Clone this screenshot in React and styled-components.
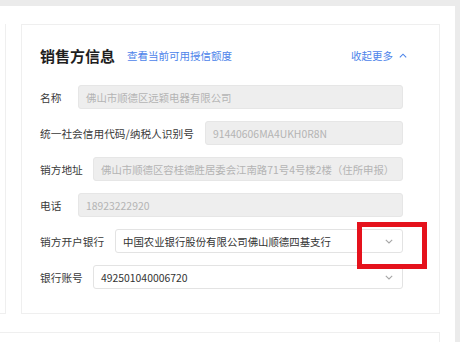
import React from "react";
import styled, { createGlobalStyle } from "styled-components";

const Global = createGlobalStyle`
  html, body { margin: 0; padding: 0; background: #ebebeb; }
  body { font-family: "Noto Sans CJK SC", "Noto Sans", sans-serif; }
  * { box-sizing: border-box; }
`;

const Page = styled.div`
  width: 460px;
  height: 342px;
  overflow: hidden;
  padding: 6px 5px 0 0;
`;

const Surface = styled.div`
  position: relative;
  background: #fff;
  height: 336px;
  padding-top: 18px;
  display: flex;
  flex-direction: column;
`;

const TopRow = styled.div`
  display: flex;
  gap: 15px;
`;

const LeftStub = styled.div`
  width: 6px;
  height: 290px;
  border-right: 1px solid #efefef;
  border-bottom: 1px solid #efefef;
`;

const Card = styled.section`
  width: 419px;
  height: 290px;
  border: 1px solid #efefef;
  padding: 0 36px 0 18px;
  display: flex;
  flex-direction: column;
`;

const Header = styled.div`
  display: flex;
  align-items: center;
  height: 60px;
  padding-top: 1px;
`;

const Title = styled.h2`
  margin: 0;
  font-size: 15px;
  font-weight: 700;
  color: #1f1f1f;
`;

const Link = styled.a`
  margin-left: 12px;
  font-size: 10.5px;
  color: #4d84ea;
  cursor: pointer;
`;

const Collapse = styled.a`
  margin-left: auto;
  margin-right: -4px;
  display: flex;
  align-items: center;
  gap: 6px;
  font-size: 10.5px;
  color: #4d84ea;
  cursor: pointer;
`;

const Rows = styled.div`
  display: flex;
  flex-direction: column;
  gap: 12px;
`;

const Row = styled.div`
  display: flex;
  align-items: center;
`;

const Label = styled.label`
  width: ${(p) => p.$w}px;
  flex: none;
  font-size: 10.7px;
  color: #3a3a3a;
  white-space: nowrap;
`;

const Field = styled.div`
  flex: 1;
  min-width: 0;
  height: 24px;
  border-radius: 3px;
  display: flex;
  align-items: center;
  padding: 0 9px 0 7px;
  font-size: 10.4px;
  white-space: nowrap;
  border: 1px solid ${(p) => (p.$disabled ? "#e6e6e6" : "#e3e3e3")};
  background: ${(p) => (p.$disabled ? "#eeeeee" : "#ffffff")};
  color: ${(p) => (p.$disabled ? "#b4b4b4" : "#333333")};
`;

const FieldText = styled.span`
  flex: 1;
`;

const Lower = styled.div`
  margin-top: 18px;
  width: 440px;
  flex: 1;
  border-top: 1px solid #efefef;
  border-right: 1px solid #efefef;
`;

const Marker = styled.div`
  position: absolute;
  left: 357px;
  top: 216px;
  width: 70px;
  height: 47px;
  border: 5px solid #e5121c;
`;

const Chevron = ({ up, color }) => (
  <svg width="8" height="5" viewBox="0 0 8 5" fill="none">
    <path
      d={up ? "M0.8 4.3 L4 1.2 L7.2 4.3" : "M0.8 0.8 L4 3.9 L7.2 0.8"}
      stroke={color}
      strokeWidth="1.1"
    />
  </svg>
);

const rows = [
  { label: "名称", w: 38, value: "佛山市顺德区远颖电器有限公司", disabled: true },
  { label: "统一社会信用代码/纳税人识别号", w: 165, value: "91440606MA4UKH0R8N", disabled: true },
  { label: "销方地址", w: 53, value: "佛山市顺德区容桂德胜居委会江南路71号4号楼2楼（住所申报）", disabled: true },
  { label: "电话", w: 38, value: "18923222920", disabled: true },
  { label: "销方开户银行", w: 75, value: "中国农业银行股份有限公司佛山顺德四基支行", select: true },
  { label: "银行账号", w: 53, value: "492501040006720", select: true },
];

export default function App() {
  return (
    <Page>
      <Global />
      <Surface>
        <TopRow>
          <LeftStub />
          <Card>
            <Header>
              <Title>销售方信息</Title>
              <Link>查看当前可用授信额度</Link>
              <Collapse>
                收起更多
                <Chevron up color="#4d84ea" />
              </Collapse>
            </Header>
            <Rows>
              {rows.map((r) => (
                <Row key={r.label}>
                  <Label $w={r.w}>{r.label}</Label>
                  <Field $disabled={r.disabled}>
                    <FieldText>{r.value}</FieldText>
                    {r.select && <Chevron color="#a6a6a6" />}
                  </Field>
                </Row>
              ))}
            </Rows>
          </Card>
        </TopRow>
        <Lower />
        <Marker />
      </Surface>
    </Page>
  );
}
